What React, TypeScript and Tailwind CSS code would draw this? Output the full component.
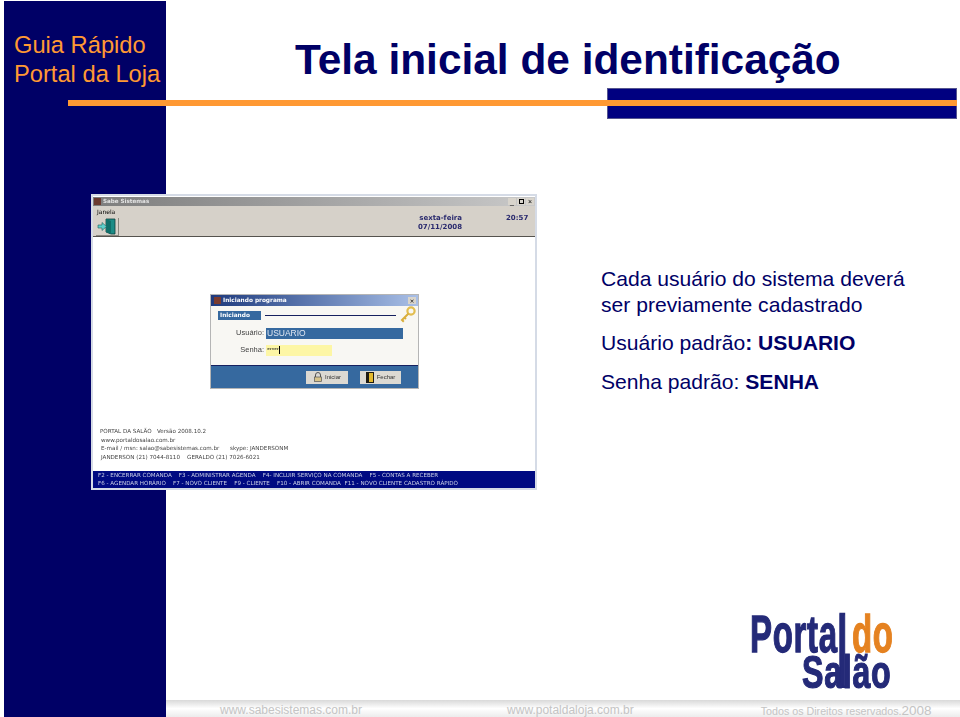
import React from 'react';

const sans = { fontFamily: '"Liberation Sans", Arial, sans-serif' };
const tahoma = { fontFamily: '"DejaVu Sans", "Liberation Sans", sans-serif' };

function ExitIcon() {
  return (
    <svg width="20" height="17" viewBox="0 0 20 17">
      <path d="M9 1h9v15h-4l-5-2z" fill="#1b8c86" stroke="#0d3f3d" strokeWidth="0.8" />
      <path d="M9 1l5 2v13l-5-2z" fill="#0f6f6a" />
      <path d="M1 7h4V4.5L9.5 8.5 5 12.500V10H1z" fill="#5fd0cc" stroke="#1c5f5d" strokeWidth="0.6" />
    </svg>
  );
}

function KeyIcon() {
  return (
    <svg width="16" height="17" viewBox="0 0 16 17">
      <circle cx="11" cy="5" r="3.600" fill="none" stroke="#e2bd4f" strokeWidth="2.200" />
      <path d="M8.500 7.500L2 14l1.800 1.800M4.500 11.500l1.500 1.500" fill="none" stroke="#d9ae3c" strokeWidth="2" />
    </svg>
  );
}

function LockIcon() {
  return (
    <svg width="10" height="10" viewBox="0 0 10 10">
      <path d="M2.500 5V3a2.500 2.500 0 015 0v2" fill="none" stroke="#555" strokeWidth="1" />
      <rect x="1.500" y="5" width="7" height="4.500" fill="#d8c48a" stroke="#555" strokeWidth="0.7" />
    </svg>
  );
}

function DoorIcon() {
  return (
    <svg width="8" height="11" viewBox="0 0 8 11">
      <rect width="8" height="11" fill="#1e1a12" />
      <rect x="3" y="1" width="4" height="9" fill="#e3b92e" />
    </svg>
  );
}

function LoginDialog() {
  return (
    <div className="w-[209px] h-[95px] bg-[#f8f7f3] border border-[#b5b5b5] flex flex-col blur-[0.3px]" style={tahoma}>
      <div className="h-[11px] shrink-0 bg-gradient-to-r from-[#1f3a7d] to-[#a9bfe6] flex items-center pl-[3px] pr-[2px] gap-[2px]">
        <div className="w-[7px] h-[7px] bg-[#7a3b2e]" />
        <span className="text-[5.800px] font-bold text-white leading-none">Iniciando programa</span>
        <div className="ml-auto w-[8px] h-[7px] bg-[#d8d4cc] text-[6px] leading-[7px] text-center text-black">×</div>
      </div>
      <div className="flex items-center h-[17px] pl-[7px] pr-[2px] pt-[1px]">
        <div className="w-[43px] h-[9px] bg-[#36699f] text-white text-[5.800px] font-bold leading-[9px] pl-[2px]">Iniciando</div>
        <div className="w-[131px] h-[1px] bg-[#16205f] ml-[4px]" />
        <div className="ml-[4px] -mt-[2px]"><KeyIcon /></div>
      </div>
      <div className="flex items-center h-[12px] mt-[4px] pl-[23px]" style={sans}>
        <span className="w-[30px] text-right text-[7.500px] text-[#444] leading-none">Usuário:</span>
        <div className="w-[137px] h-[11px] ml-[2px] bg-[#36699f] text-[8.500px] text-[#dfe6f2] leading-[11px] pl-[1px]">USUARIO</div>
      </div>
      <div className="flex items-center h-[12px] mt-[5px] pl-[23px]" style={sans}>
        <span className="w-[30px] text-right text-[7.500px] text-[#444] leading-none">Senha:</span>
        <div className="w-[66px] h-[11px] ml-[2px] bg-[#fdf6a5] text-[6px] text-[#222] leading-[11px] pl-[1px] flex items-center">
          *****<span className="w-px h-[8px] bg-black" />
        </div>
      </div>
      <div className="mt-auto h-[23px] bg-[#36699f] border-t border-[#16205f] flex items-center justify-end gap-[12px] pr-[17px]" style={sans}>
        <div className="w-[42px] h-[13px] bg-[#dcd9d2] flex items-center justify-center gap-[2px] text-[6px] text-[#333]">
          <LockIcon />
          <span>Iniciar</span>
        </div>
        <div className="w-[41px] h-[13px] bg-[#dcd9d2] flex items-center justify-center gap-[3px] text-[6px] text-[#333]">
          <DoorIcon />
          <span>Fechar</span>
        </div>
      </div>
    </div>
  );
}

function AppShot() {
  return (
    <div className="w-[446px] h-[296px] bg-white border-2 border-[#d5dbe6] flex flex-col">
      <div className="h-[9px] shrink-0 mt-px bg-gradient-to-r from-[#7d7d7d] to-[#c9c9c9] flex items-center pl-[1px] pr-[1px] blur-[0.3px]">
        <div className="w-[7px] h-[7px] bg-[#6b3a2f]" />
        <span className="ml-[2px] text-[5.600px] font-bold text-[#e4e4e4] leading-none" style={tahoma}>Sabe Sistemas</span>
        <div className="ml-auto flex gap-px text-[7px] leading-[7px] text-black">
          <span className="w-[8px] h-[7px] bg-[#d8d4cc] text-center">_</span>
          <span className="w-[8px] h-[7px] bg-[#d8d4cc] flex items-center justify-center"><span className="w-[5px] h-[5px] border border-black" /></span>
          <span className="w-[8px] h-[7px] bg-[#d8d4cc] text-center">×</span>
        </div>
      </div>
      <div className="h-[31px] shrink-0 bg-[#d6d1c9] border-b border-[#55534e] flex blur-[0.3px]" style={tahoma}>
        <div className="flex flex-col pl-[3px]">
          <span className="text-[6px] text-black leading-[12px] pl-[1px]">Janela</span>
          <div className="w-[23px] h-[19px] border-r border-b border-[#8b8880] flex items-center justify-center"><ExitIcon /></div>
        </div>
        <div className="ml-auto flex pt-[8px]">
          <div className="text-[7px] font-bold text-[#2a2a6e] leading-[9px] text-right">
            <div>sexta-feira</div>
            <div>07/11/2008</div>
          </div>
          <div className="w-[73px] pl-[44px] text-[7px] font-bold text-[#2a2a6e] leading-[9px]">20:57</div>
        </div>
      </div>
      <div className="flex-1 flex flex-col min-h-0">
        <div className="pl-[117px] pt-[57px]"><LoginDialog /></div>
        <div className="mt-[38px] pl-[7px] text-[5.600px] leading-[8.500px] text-[#444] blur-[0.25px]" style={tahoma}>
          <div>PORTAL DA SALÃO &nbsp; Versão 2008.10.2</div>
          <div className="pl-[1px]">www.portaldosalao.com.br</div>
          <div className="pl-[1px] whitespace-pre">E-mail / msn: salao@sabesistemas.com.br      skype: JANDERSONM</div>
          <div className="pl-[1px] whitespace-pre">JANDERSON (21) 7044-8110    GERALDO (21) 7026-6021</div>
        </div>
        <div className="mt-auto h-[17px] bg-[#000a82] text-[#c9cfe6] text-[5.600px] leading-[8px] pl-[5px] whitespace-pre blur-[0.25px]" style={tahoma}>
          <div>F2 - ENCERRAR COMANDA    F3 - ADMINISTRAR AGENDA    F4- INCLUIR SERVIÇO NA COMANDA    F5 - CONTAS A RECEBER</div>
          <div>F6 - AGENDAR HORÁRIO    F7 - NOVO CLIENTE    F9 - CLIENTE    F10 - ABRIR COMANDA  F11 - NOVO CLIENTE CADASTRO RÁPIDO</div>
        </div>
      </div>
    </div>
  );
}

function Logo() {
  return (
    <div className="relative w-[150px] h-[80px] font-bold text-[#242a78] blur-[0.3px] [-webkit-text-stroke:1.200px_#242a78]" style={sans}>
      <div className="absolute left-0 top-0 origin-top-left scale-x-[0.66] scale-y-[1.05] text-[50px] leading-[40px] tracking-[1px] whitespace-nowrap">
        Porta<span className="inline-block origin-top scale-y-[1.9] scale-x-[1.1]">l</span>
      </div>
      <div className="absolute left-[102px] top-0 origin-top-left scale-x-[0.66] scale-y-[1.05] text-[50px] leading-[40px] tracking-[1px] text-[#e58220] [-webkit-text-stroke:1.200px_#e58220]">do</div>
      <div className="absolute left-[52px] top-[40px] origin-top-left scale-x-[0.7] text-[46px] leading-[38px] tracking-[1px] whitespace-nowrap">Salão</div>
    </div>
  );
}

export default function App() {
  return (
    <div className="relative w-[960px] h-[717px] overflow-hidden bg-white flex pl-[4px]" style={sans}>
      {/* barra lateral */}
      <aside className="w-[162px] mt-px h-[716px] shrink-0 bg-[#000066] pt-[30px] pl-[10px] text-[23.700px] leading-[29px] text-[#ff9933]">
        <div>Guia Rápido</div>
        <div>Portal da Loja</div>
      </aside>

      <main className="flex-1 flex flex-col min-w-0">
        <h1 className="pl-[129px] pt-[36px] text-[42.400px] leading-[48px] font-bold text-[#000066] whitespace-nowrap">
          Tela inicial de identificação
        </h1>

        <div className="flex flex-1 min-h-0">
          <div className="ml-[-75px] mt-[110px] shrink-0 z-10"><AppShot /></div>
          <div className="pl-[64px] pt-[182px] text-[21.100px] text-[#000066] leading-[26px] whitespace-nowrap">
            <p>Cada usuário do sistema deverá</p>
            <p>ser previamente cadastrado</p>
            <p className="mt-[12px]">Usuário padrão<b>: USUARIO</b></p>
            <p className="mt-[13px]">Senha padrão: <b>SENHA</b></p>
          </div>
        </div>

        {/* rodapé */}
        <footer className="relative h-[17px] bg-gradient-to-b from-[#d9d9d9] via-white to-[#ececec] text-[12px] leading-[17px] text-[#c4c4c4] flex pt-[2px] whitespace-nowrap">
          <span className="ml-[54px]">www.sabesistemas.com.br</span>
          <span className="ml-[145px]">www.potaldaloja.com.br</span>
          <span className="ml-[127px] text-[10.700px]">Todos os Direitos reservados.<span className="text-[13.500px]">2008</span></span>
        </footer>
      </main>

      {/* faixa do título, sobre a barra lateral */}
      <div className="absolute left-[607px] right-[3px] top-[88px] h-[31px] bg-[#000080] border border-[#55558f]" />
      <div className="absolute left-[68px] right-[3px] top-[100px] h-[6px] bg-[#ff9933]" />

      <div className="absolute left-[750px] top-[613px]"><Logo /></div>
    </div>
  );
}
